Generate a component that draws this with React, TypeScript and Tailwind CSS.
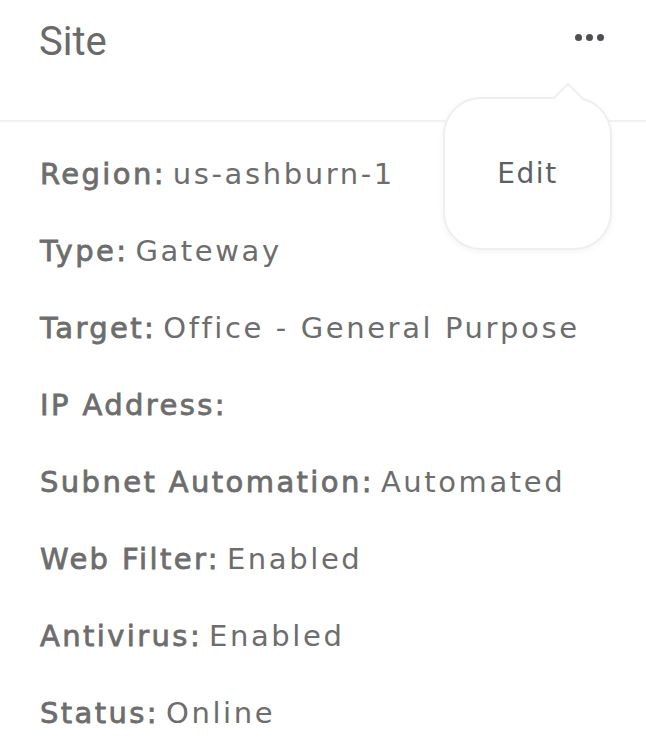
import React from 'react';

const rows: { label: string; value: string }[] = [
  { label: 'Region:', value: 'us-ashburn-1' },
  { label: 'Type:', value: 'Gateway' },
  { label: 'Target:', value: 'Office - General Purpose' },
  { label: 'IP Address:', value: '' },
  { label: 'Subnet Automation:', value: 'Automated' },
  { label: 'Web Filter:', value: 'Enabled' },
  { label: 'Antivirus:', value: 'Enabled' },
  { label: 'Status:', value: 'Online' },
];

export default function App() {
  return (
    <div className="relative w-[646px] h-[754px] bg-white overflow-hidden font-['DejaVu_Sans',sans-serif] text-[#6d6d6d]">
      {/* Header */}
      <div className="h-[122px] border-b-2 border-[#f1f1f6] flex items-start justify-between pl-[39px] pr-[42px] pt-[16px]">
        <h2 className="font-['Roboto',sans-serif] text-[40px] leading-[52px] text-[#6a6a6a]">Site</h2>
        <div className="flex items-center gap-[4px] mt-[18px]">
          <span className="w-[7px] h-[7px] rounded-full bg-[#4d4f55]" />
          <span className="w-[7px] h-[7px] rounded-full bg-[#4d4f55]" />
          <span className="w-[7px] h-[7px] rounded-full bg-[#4d4f55]" />
        </div>
      </div>

      {/* Details */}
      <div className="pt-[14px] px-[40px]">
        {rows.map((r) => (
          <div key={r.label} className="h-[77px] flex items-center text-[29px] whitespace-nowrap">
            <span className="tracking-[2.4px] [-webkit-text-stroke:0.8px_#6d6d6d]">{r.label}</span>
            {r.value && <span className="ml-[7px] tracking-[2.6px]">{r.value}</span>}
          </div>
        ))}
      </div>

      {/* Popover menu */}
      <div className="absolute left-[443px] top-[97px] w-[169px] h-[153px]">
        <div className="absolute left-[114px] top-[-10px] w-[22px] h-[22px] rotate-45 bg-white border-l-2 border-t-2 border-[#eeeef4]" />
        <div className="w-full h-full rounded-[38px] bg-white border-2 border-[#eeeef4] shadow-[0_2px_6px_rgba(30,30,60,0.05)] flex items-center justify-center">
          <span className="text-[28px] tracking-[1.6px] text-[#5c6068] relative">Edit</span>
        </div>
      </div>
    </div>
  );
}
